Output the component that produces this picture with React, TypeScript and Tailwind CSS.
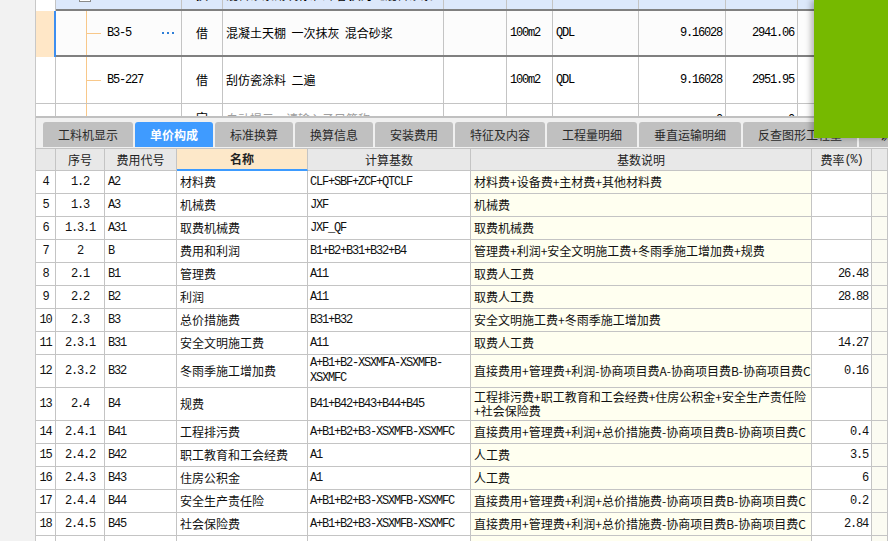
import React from 'react';

const LINE = 'border-[#c4c4c4]';
const MONO = "[font-family:'Liberation_Mono',monospace] text-[12px] tracking-[-1.2px]";
const TOP_COLS = 'grid grid-cols-[126px_41px_221px_63px_46px_86px_87px_72px_90px]';
const FEE_COLS = 'grid grid-cols-[20px_49px_72px_131px_163px_341px_60px_16px]';

type FeeRow = {
  no: string;
  seq: string;
  code: string;
  name: string;
  base: string;
  desc: string;
  rate: string;
  tall?: boolean;
};

const FEE_ROWS: FeeRow[] = [
  { no: '4', seq: '1.2', code: 'A2', name: '材料费', base: 'CLF+SBF+ZCF+QTCLF', desc: '材料费+设备费+主材费+其他材料费', rate: '' },
  { no: '5', seq: '1.3', code: 'A3', name: '机械费', base: 'JXF', desc: '机械费', rate: '' },
  { no: '6', seq: '1.3.1', code: 'A31', name: '取费机械费', base: 'JXF_QF', desc: '取费机械费', rate: '' },
  { no: '7', seq: '2', code: 'B', name: '费用和利润', base: 'B1+B2+B31+B32+B4', desc: '管理费+利润+安全文明施工费+冬雨季施工增加费+规费', rate: '' },
  { no: '8', seq: '2.1', code: 'B1', name: '管理费', base: 'A11', desc: '取费人工费', rate: '26.48' },
  { no: '9', seq: '2.2', code: 'B2', name: '利润', base: 'A11', desc: '取费人工费', rate: '28.88' },
  { no: '10', seq: '2.3', code: 'B3', name: '总价措施费', base: 'B31+B32', desc: '安全文明施工费+冬雨季施工增加费', rate: '' },
  { no: '11', seq: '2.3.1', code: 'B31', name: '安全文明施工费', base: 'A11', desc: '取费人工费', rate: '14.27' },
  {
    no: '12', seq: '2.3.2', code: 'B32', name: '冬雨季施工增加费',
    base: 'A+B1+B2-XSXMFA-XSXMFB-\nXSXMFC',
    desc: '直接费用+管理费+利润-协商项目费A-协商项目费B-协商项目费C', rate: '0.16', tall: true,
  },
  {
    no: '13', seq: '2.4', code: 'B4', name: '规费', base: 'B41+B42+B43+B44+B45',
    desc: '工程排污费+职工教育和工会经费+住房公积金+安全生产责任险\n+社会保险费', rate: '', tall: true,
  },
  { no: '14', seq: '2.4.1', code: 'B41', name: '工程排污费', base: 'A+B1+B2+B3-XSXMFB-XSXMFC', desc: '直接费用+管理费+利润+总价措施费-协商项目费B-协商项目费C', rate: '0.4' },
  { no: '15', seq: '2.4.2', code: 'B42', name: '职工教育和工会经费', base: 'A1', desc: '人工费', rate: '3.5' },
  { no: '16', seq: '2.4.3', code: 'B43', name: '住房公积金', base: 'A1', desc: '人工费', rate: '6' },
  { no: '17', seq: '2.4.4', code: 'B44', name: '安全生产责任险', base: 'A+B1+B2+B3-XSXMFB-XSXMFC', desc: '直接费用+管理费+利润+总价措施费-协商项目费B-协商项目费C', rate: '0.2' },
  { no: '18', seq: '2.4.5', code: 'B45', name: '社会保险费', base: 'A+B1+B2+B3-XSXMFB-XSXMFC', desc: '直接费用+管理费+利润+总价措施费-协商项目费B-协商项目费C', rate: '2.84' },
  { no: '', seq: '', code: '', name: '', base: '', desc: '', rate: '' },
];

const TABS = [
  { label: '工料机显示', w: 'w-[90px]' },
  { label: '单价构成', w: 'w-[78px]', active: true },
  { label: '标准换算', w: 'w-[78px]' },
  { label: '换算信息', w: 'w-[78px]' },
  { label: '安装费用', w: 'w-[78px]' },
  { label: '特征及内容', w: 'w-[90px]' },
  { label: '工程量明细', w: 'w-[90px]' },
  { label: '垂直运输明细', w: 'w-[102px]' },
  { label: '反查图形工程量', w: 'w-[114px]' },
  { label: '说明信息', w: 'w-[90px]' },
];

const cell = `border-r border-b ${LINE} flex items-center overflow-hidden`;

// tree guide in the code column of the upper grid
const TreeLine = () => (
  <>
    <div className="absolute left-[30px] top-0 bottom-0 w-px bg-[#f8c88a]" />
    <div className="absolute left-[30px] top-1/2 w-[15px] h-px bg-[#f8c88a]" />
  </>
);

const TopGrid = () => (
  <div className="h-[118px] shrink-0 overflow-hidden border-b-2 border-[#c0c0c0] bg-white">
    <div className="-mt-[35px]">
      {/* previous item, mostly scrolled away */}
      <div className="flex h-[46px]">
        <div className={`w-[20px] h-full border-r ${LINE} bg-white`} />
        <div className={`flex-1 ${TOP_COLS} border-b-2 border-[#808080] bg-[#dce8fb]`}>
          <div className={`border-r ${LINE} flex items-end pb-[7px] pl-[23px] gap-[5px]`}>
            <span className="w-[12px] h-[12px] border border-[#8a8a8a] bg-white" />
            <span className={`${MONO} leading-[14px]`}>010101001001</span>
          </div>
          <div className={`border-r ${LINE} flex items-end justify-center pb-[7px] text-[12px] leading-[14px]`}>换</div>
          <div className={`border-r ${LINE} flex items-end pb-[7px] pl-[3px] text-[12px] leading-[14px] whitespace-nowrap overflow-hidden`}>
            混合砂浆砌筑标准砖墙 换为【混合砂浆 M5】
          </div>
          <div className={`border-r ${LINE}`} />
          <div className={`border-r ${LINE} flex items-end pb-[7px] pl-[3px] ${MONO} leading-[14px]`}>m2</div>
          <div className={`border-r ${LINE} flex items-end pb-[7px] pl-[3px] ${MONO} leading-[14px]`}>0.0012*2.5</div>
          <div className={`border-r ${LINE} flex items-end justify-end pb-[7px] pr-[3px] ${MONO} leading-[14px]`}>123.45</div>
          <div className={`border-r ${LINE} flex items-end justify-end pb-[7px] pr-[3px] ${MONO} leading-[14px] text-[#ff0000]`}>38.76</div>
          <div />
        </div>
      </div>

      {/* selected row */}
      <div className="flex h-[46px]">
        <div className="w-[20px] h-full border-r-2 border-r-[#3d8ef0] bg-[#ffe7c7]" />
        <div className={`flex-1 ${TOP_COLS} border-b-2 border-[#808080] bg-[#fcfcfc]`}>
          <div className={`relative border-r ${LINE} flex items-center pl-[51px] pr-[7px]`}>
            <TreeLine />
            <span className={MONO}>B3-5</span>
            <span className="ml-auto flex gap-[3px]">
              <span className="w-[2px] h-[2px] bg-[#2f7fd8]" />
              <span className="w-[2px] h-[2px] bg-[#2f7fd8]" />
              <span className="w-[2px] h-[2px] bg-[#2f7fd8]" />
            </span>
          </div>
          <div className={`border-r ${LINE} flex items-center justify-center text-[12px]`}>借</div>
          <div className={`border-r ${LINE} flex items-center pl-[3px] text-[12px] whitespace-pre`}>
            混凝土天棚  一次抹灰  混合砂浆
          </div>
          <div className={`border-r ${LINE}`} />
          <div className={`border-r ${LINE} flex items-center pl-[3px] ${MONO}`}>100m2</div>
          <div className={`border-r ${LINE} flex items-center pl-[3px] ${MONO}`}>QDL</div>
          <div className={`border-r ${LINE} flex items-center justify-end pr-[3px] ${MONO}`}>9.16028</div>
          <div className={`border-r ${LINE} flex items-center justify-end pr-[3px] ${MONO}`}>2941.06</div>
          <div />
        </div>
      </div>

      <div className="flex h-[47px]">
        <div className={`w-[20px] h-full border-r border-b ${LINE} bg-white`} />
        <div className={`flex-1 ${TOP_COLS} border-b ${LINE} bg-white`}>
          <div className={`relative border-r ${LINE} flex items-center pl-[51px]`}>
            <TreeLine />
            <span className={MONO}>B5-227</span>
          </div>
          <div className={`border-r ${LINE} flex items-center justify-center text-[12px]`}>借</div>
          <div className={`border-r ${LINE} flex items-center pl-[3px] text-[12px] whitespace-pre`}>刮仿瓷涂料  二遍</div>
          <div className={`border-r ${LINE}`} />
          <div className={`border-r ${LINE} flex items-center pl-[3px] ${MONO}`}>100m2</div>
          <div className={`border-r ${LINE} flex items-center pl-[3px] ${MONO}`}>QDL</div>
          <div className={`border-r ${LINE} flex items-center justify-end pr-[3px] ${MONO}`}>9.16028</div>
          <div className={`border-r ${LINE} flex items-center justify-end pr-[3px] ${MONO}`}>2951.95</div>
          <div />
        </div>
      </div>

      {/* empty input row, cut off by the splitter */}
      <div className="flex h-[24px]">
        <div className={`w-[20px] h-full border-r ${LINE} bg-white`} />
        <div className={`flex-1 ${TOP_COLS} bg-white`}>
          <div className={`relative border-r ${LINE}`}>
            <div className="absolute left-[30px] top-0 bottom-0 w-px bg-[#f8c88a]" />
          </div>
          <div className={`border-r ${LINE} flex items-start pt-[5px] justify-center text-[12px]`}>定</div>
          <div className={`border-r ${LINE} flex items-start pt-[6px] pl-[3px] text-[12px] text-[#a0a0a0]`}>自动提示：请输入子目简称</div>
          <div className={`border-r ${LINE}`} />
          <div className={`border-r ${LINE}`} />
          <div className={`border-r ${LINE}`} />
          <div className={`border-r ${LINE} flex items-start pt-[7px] justify-end pr-[3px] ${MONO}`}>0</div>
          <div className={`border-r ${LINE} flex items-start pt-[7px] justify-end pr-[3px] ${MONO}`}>0</div>
          <div />
        </div>
      </div>
    </div>
  </div>
);

const TabBar = () => (
  <div className="h-[30px] shrink-0 bg-[#f0f0f0] flex items-end pl-[7px] gap-[2px] overflow-hidden">
    {TABS.map(t => (
      <div
        key={t.label}
        className={`${t.w} shrink-0 h-[25px] mb-[1px] rounded-t-[3px] flex items-center justify-center text-[12px] whitespace-nowrap ${
          t.active ? 'bg-[#3f9bff] text-white font-bold' : 'bg-[#c0c0c0] text-[#2a2a2a]'
        }`}
      >
        {t.label}
      </div>
    ))}
  </div>
);

const FeeHeader = () => (
  <div className={`${FEE_COLS} h-[22px] bg-[#e8e8e8] text-[12px] text-[#222] whitespace-nowrap`}>
    <div className={cell} />
    <div className={`${cell} justify-center`}>序号</div>
    <div className={`${cell} justify-center`}>费用代号</div>
    <div className={`border-r ${LINE} border-b-2 border-b-[#3d9bff] bg-[#fde8c9] flex items-center justify-center font-bold`}>名称</div>
    <div className={`${cell} justify-center`}>计算基数</div>
    <div className={`${cell} justify-center`}>基数说明</div>
    <div className={`${cell} justify-center`}>
      费率<span className={MONO}>(%)</span>
    </div>
    <div className={cell} />
  </div>
);

const FeeRowView = ({ r }: { r: FeeRow }) => (
  <div className={`${FEE_COLS} ${r.tall ? 'h-[33px]' : 'h-[23px]'} text-[#111]`}>
    <div className={`${cell} justify-center bg-white ${MONO}`}>{r.no}</div>
    <div className={`${cell} justify-center bg-white ${MONO}`}>{r.seq}</div>
    <div className={`${cell} pl-[3px] bg-white ${MONO}`}>{r.code}</div>
    <div className={`${cell} pl-[3px] bg-white text-[12px] whitespace-nowrap`}>{r.name}</div>
    <div className={`${cell} pl-[2px] bg-white ${MONO} whitespace-pre-line leading-[15px]`}>{r.base}</div>
    <div className={`${cell} pl-[3px] bg-[#fffff0] text-[12px] whitespace-pre-line leading-[14px]`}>{r.desc}</div>
    <div className={`${cell} justify-end pr-[3px] bg-white ${MONO}`}>{r.rate}</div>
    <div className={`${cell} bg-[#fbfbf2]`} />
  </div>
);

const App: React.FC = () => {
  return (
    <div className="relative w-[888px] h-[541px] overflow-hidden flex bg-[#f2f2f2] [font-family:'Noto_Sans_CJK_SC',sans-serif]">
      <div className="w-[36px] shrink-0 bg-[#f2f2f2] border-r border-[#c8c8c8]" />
      <div className="w-[852px] shrink-0 flex flex-col">
        <TopGrid />
        <TabBar />
        <div className={`shrink-0 border-t ${LINE} bg-white`}>
          <FeeHeader />
          {FEE_ROWS.map((r, i) => (
            <FeeRowView key={i} r={r} />
          ))}
        </div>
      </div>

      {/* floating green panel in the top right corner */}
      <div className="absolute left-[814px] top-0 w-[74px] h-[138px] bg-[#76b900] shadow-[-3px_0_6px_rgba(0,0,0,0.28)]" />
    </div>
  );
};

export default App;
